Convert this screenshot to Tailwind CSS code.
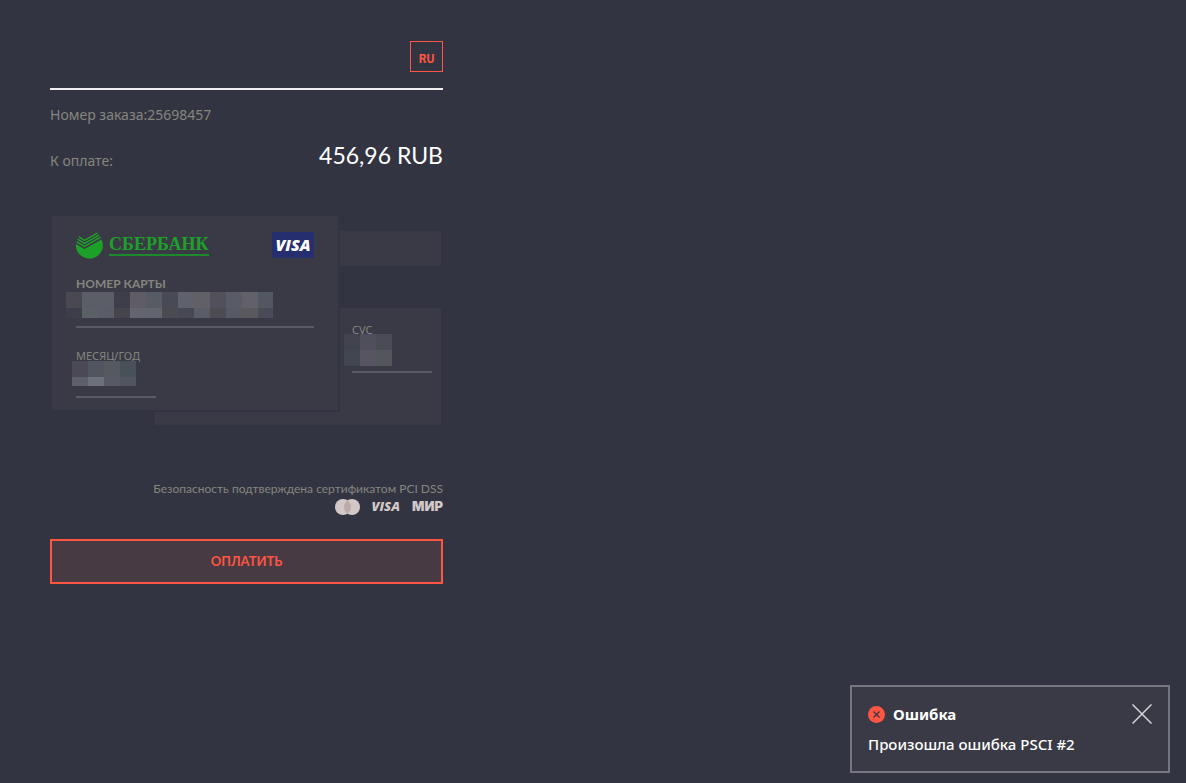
<!DOCTYPE html>
<html lang="ru">
<head>
    <meta charset="UTF-8">
    <meta name="viewport" content="width=device-width, initial-scale=1">
    <title>Оплата заказа</title>
    <script src="https://cdn.jsdelivr.net/npm/@tailwindcss/browser@4"></script>
</head>
<body class="min-h-screen bg-[#333441] font-['Noto_Sans',sans-serif] text-[#85857f]">
    <main class="w-full max-w-[443px] pl-[50px] pt-10">
        <!-- Шапка -->
        <header class="flex justify-end border-b-2 border-[#f0eef0] pb-4 pt-px">
            <button type="button" class="h-[31px] w-[33px] border border-[#ff5543] pt-1 font-[Roboto,sans-serif] text-xs font-bold text-[#ff5543]">RU</button>
        </header>

        <!-- Заказ -->
        <p class="mt-[13px] text-sm leading-6">Номер заказа:25698457</p>
        <div class="mt-2.5 flex items-start justify-between">
            <span class="pt-3 text-sm leading-6">К оплате:</span>
            <span class="font-[Lato,sans-serif] text-[23px] leading-9 text-white">456,96 RUB</span>
        </div>

        <form>
            <!-- Карта -->
            <div class="mx-0.5 mt-[43px] grid">
                <!-- Обратная сторона -->
                <div class="col-start-1 row-start-1 mt-[15px] flex h-[194px] w-[286px] flex-col justify-self-end bg-[#393a45]">
                    <div class="mt-[35px] h-[42px] bg-[#333441]"></div>
                    <div class="relative mr-[9px] mt-3.5 w-20 self-end">
                        <label for="cvc" class="block text-[11px] leading-4">CVC</label>
                        <input id="cvc" type="text" inputmode="numeric" class="block h-[35px] w-full border-b-2 border-[#5a5a64] bg-transparent outline-none">
                        <svg class="absolute -left-2 top-3 h-8 w-12" viewBox="0 0 48 32" shape-rendering="crispEdges" aria-hidden="true">
                            <path fill="#41434e" d="M0 0h16v16H0z"/>
                            <path fill="#4e4f5b" d="M16 0h16v16H16z"/>
                            <path fill="#494c55" d="M32 0h16v16H32z"/>
                            <path fill="#414650" d="M0 16h16v16H0z"/>
                            <path fill="#565561" d="M16 16h16v16H16z"/>
                            <path fill="#53575d" d="M32 16h16v16H32z"/>
                        </svg>
                    </div>
                </div>

                <!-- Лицевая сторона -->
                <div class="relative col-start-1 row-start-1 h-[194px] w-[286px] self-start bg-[#393a45] px-6 pt-4 shadow-[2px_2px_0_#333441]">
                    <div class="flex h-[26px] items-center justify-between">
                        <div class="flex items-center gap-1.5 text-[#1da027]">
                            <svg class="h-[27px] w-[27px]" viewBox="0 0 27 27" fill="currentColor" aria-hidden="true">
                                <path d="M0 12 8.5 17 25.5 7.5A13.5 13.2 0 1 1 0 12z"/>
                                <g fill="none" stroke="currentColor" stroke-width="1.5">
                                    <path d="M.7 9.8 8.5 14.4 24.6 5.2"/>
                                    <path d="M1.6 7.2 8.5 11.4 23 3.1"/>
                                    <path d="M2.9 4.8 8.5 8.4 21.4 1.2"/>
                                </g>
                            </svg>
                            <span class="border-b-2 border-[#1a8a2a] font-['Liberation_Serif',serif] text-[18px] font-bold leading-5">СБЕРБАНК</span>
                        </div>
                        <span class="h-[26px] w-[42px] rounded-xs bg-[#252f70] text-center font-['Open_Sans',sans-serif] text-[16px] font-extrabold italic leading-[26px] text-white">VISA</span>
                    </div>
                    <div class="relative mt-8">
                        <label for="pan" class="absolute bottom-9 left-0 font-[Lato,sans-serif] text-xs font-bold leading-4">НОМЕР КАРТЫ</label>
                        <input id="pan" type="text" inputmode="numeric" class="block h-[38px] w-full border-b-2 border-[#5a5a64] bg-transparent outline-none">
                        <svg class="absolute -left-2.5 top-0.5 h-[26px] w-[207px]" viewBox="0 0 207 26" shape-rendering="crispEdges" aria-hidden="true">
                            <path fill="#4a4851" d="M0 0h16v16H0z"/>
                            <path fill="#5c5e67" d="M16 0h32v16H16z"/>
                            <path fill="#3d3e4a" d="M48 0h16v16H48z"/>
                            <path fill="#5f5c66" d="M64 0h16v16H64z"/>
                            <path fill="#575b63" d="M80 0h16v16H80z"/>
                            <path fill="#484a56" d="M96 0h16v16H96z"/>
                            <path fill="#5f626d" d="M112 0h16v16h-16z"/>
                            <path fill="#626067" d="M128 0h16v16h-16z"/>
                            <path fill="#52515b" d="M144 0h16v16h-16z"/>
                            <path fill="#595b67" d="M160 0h16v16h-16z"/>
                            <path fill="#626068" d="M176 0h16v16h-16z"/>
                            <path fill="#525762" d="M192 0h15v16h-15z"/>
                            <path fill="#3e3e4b" d="M0 16h16v10H0z"/>
                            <path fill="#5b5f66" d="M16 16h16v10H16z"/>
                            <path fill="#5a5d68" d="M32 16h16v10H32z"/>
                            <path fill="#46444d" d="M48 16h16v10H48z"/>
                            <path fill="#62656e" d="M64 16h32v10H64z"/>
                            <path fill="#4a4a53" d="M96 16h16v10H96z"/>
                            <path fill="#464854" d="M112 16h16v10h-16z"/>
                            <path fill="#5a5d66" d="M128 16h16v10h-16z"/>
                            <path fill="#4d4c53" d="M144 16h16v10h-16z"/>
                            <path fill="#555a65" d="M160 16h16v10h-16z"/>
                            <path fill="#5a5a5e" d="M176 16h16v10h-16z"/>
                            <path fill="#4a4b58" d="M192 16h15v10h-15z"/>
                        </svg>
                    </div>
                    <div class="relative mt-5 w-20">
                        <label for="expiry" class="block text-[11px] leading-4">МЕСЯЦ/ГОД</label>
                        <input id="expiry" type="text" inputmode="numeric" class="block h-[34px] w-full border-b-2 border-[#5a5a64] bg-transparent outline-none">
                        <svg class="absolute -left-1 top-[13px] h-[25px] w-16" viewBox="0 0 64 25" shape-rendering="crispEdges" aria-hidden="true">
                            <path fill="#4b4a54" d="M0 0h16v16H0z"/>
                            <path fill="#52545f" d="M16 0h16v16H16z"/>
                            <path fill="#555960" d="M32 0h16v16H32z"/>
                            <path fill="#495158" d="M48 0h16v16H48z"/>
                            <path fill="#5f5f69" d="M0 16h16v9H0z"/>
                            <path fill="#6c707a" d="M16 16h16v9H16z"/>
                            <path fill="#595965" d="M32 16h16v9H32z"/>
                            <path fill="#515560" d="M48 16h16v9H48z"/>
                        </svg>
                    </div>
                </div>
            </div>

            <!-- Безопасность -->
            <p class="mt-14 text-right font-[Lato,sans-serif] text-xs leading-4">Безопасность подтверждена сертификатом PCI DSS</p>
            <div class="mt-0.5 flex h-4 items-center justify-end gap-3 text-[#d2c8c8]">
                <svg class="h-4 w-[25px]" viewBox="0 0 25 16" role="img" aria-label="Mastercard">
                    <circle cx="8" cy="8" r="8" fill="#d2c8c8"/>
                    <circle cx="17" cy="8" r="8" fill="#d2c8c8"/>
                    <path d="M12.5 1.4a8 8 0 0 1 0 13.2 8 8 0 0 1 0-13.2z" fill="#bcaaa8"/>
                </svg>
                <span class="font-['Open_Sans',sans-serif] text-[13px] font-extrabold italic">VISA</span>
                <span class="font-[Inter,sans-serif] text-[13px] font-black">МИР</span>
            </div>
            <button type="submit" class="mt-6 h-[45px] w-full border-2 border-[#ff5543] bg-[#483a42] font-[Lato,sans-serif] text-[13px] font-bold text-[#ff5543]">ОПЛАТИТЬ</button>
        </form>
    </main>

    <!-- Уведомление об ошибке -->
    <div role="alert" class="fixed bottom-2.5 right-4 h-[88px] w-80 border-2 border-[#757680] bg-[#393a45] px-4 pt-[15px] text-white">
        <div class="flex h-6 items-center gap-2">
            <svg class="h-[17px] w-[17px]" viewBox="0 0 17 17" aria-hidden="true">
                <circle cx="8.5" cy="8.5" r="8.5" fill="#ff5543"/>
                <path d="M5.5 5.5l6 6m0-6-6 6" stroke="#393a45" stroke-width="1.4"/>
            </svg>
            <strong class="flex-1 text-[15px] font-bold">Ошибка</strong>
            <button type="button" aria-label="Закрыть">
                <svg class="h-5 w-5" viewBox="0 0 20 20" stroke="#d4d4d6" stroke-width="1.5" aria-hidden="true">
                    <path d="M.5.5l19 19m0-19-19 19"/>
                </svg>
            </button>
        </div>
        <p class="mt-1.5 text-[15px] font-medium leading-6">Произошла ошибка PSCI #2</p>
    </div>
</body>
</html>
